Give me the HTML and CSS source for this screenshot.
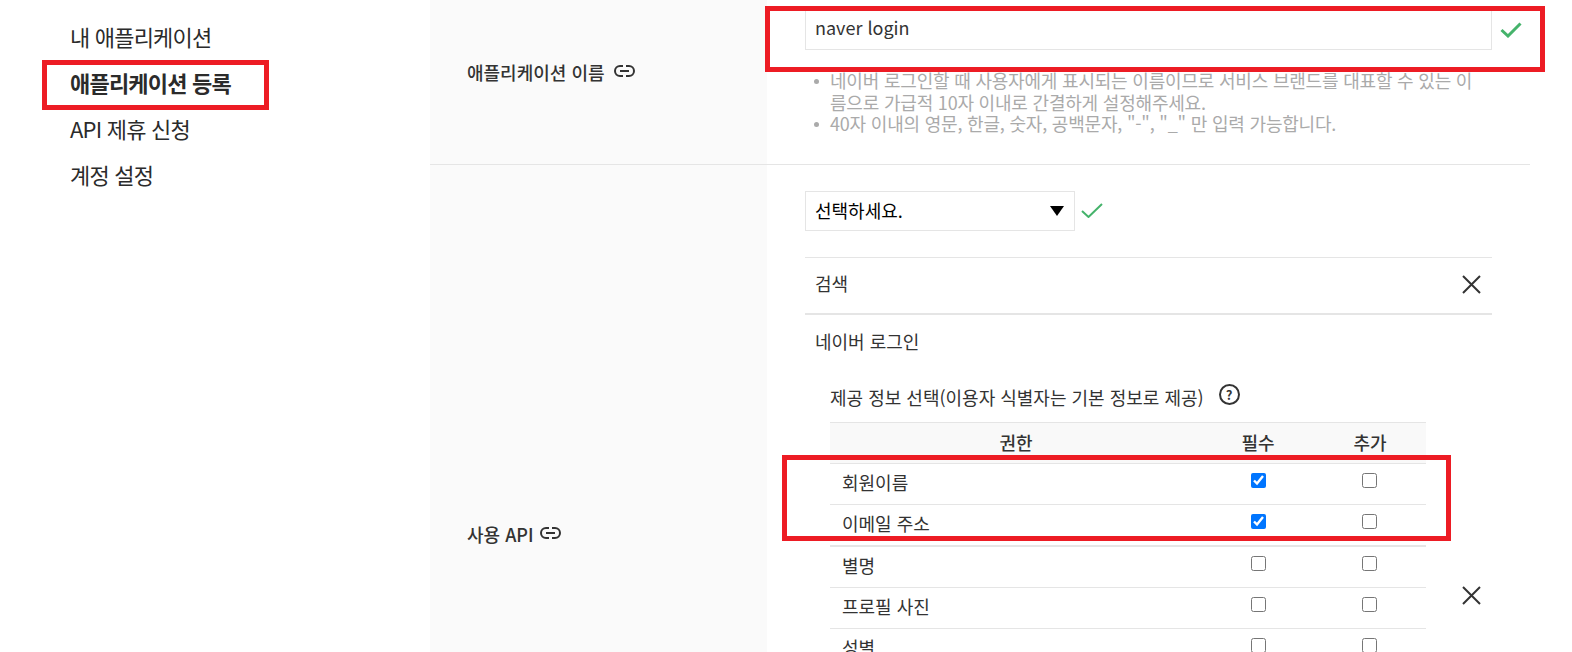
FILE: index.html
```html
<!DOCTYPE html>
<html lang="ko">
<head>
<meta charset="utf-8">
<title>애플리케이션 등록</title>
<link rel="stylesheet" href="styles.css">
</head>
<body>
<div class="page">
  <aside class="side">
    <ul class="nav">
      <li>내 애플리케이션</li>
      <li class="active">애플리케이션 등록</li>
      <li>API 제휴 신청</li>
      <li>계정 설정</li>
    </ul>
  </aside>
  <main class="main">
    <section class="row row-name">
      <div class="label">
        <span>애플리케이션 이름</span>
        <svg class="link" viewBox="0 0 21 12"><path d="M9 1H6a4.500 4.500 0 0 0 0 10h3M12 1h3a4.500 4.500 0 0 1 0 10h-3M6 6h9"/></svg>
      </div>
      <div class="value">
        <div class="field">
          <input class="text" type="text" value="naver login">
          <svg class="ok ok-big" viewBox="0 0 22 16"><path d="M1.500 8l6.500 6L20.500 1.500"/></svg>
        </div>
        <ul class="hint">
          <li>네이버 로그인할 때 사용자에게 표시되는 이름이므로 서비스 브랜드를 대표할 수 있는 이름으로 가급적 10자 이내로 간결하게 설정해주세요.</li>
          <li>40자 이내의 영문, 한글, 숫자, 공백문자, "-", "_" 만 입력 가능합니다.</li>
        </ul>
      </div>
    </section>
    <section class="row row-api">
      <div class="label">
        <span>사용 API</span>
        <svg class="link" viewBox="0 0 21 12"><path d="M9 1H6a4.500 4.500 0 0 0 0 10h3M12 1h3a4.500 4.500 0 0 1 0 10h-3M6 6h9"/></svg>
      </div>
      <div class="value">
        <div class="field">
          <div class="select">선택하세요.<i class="arrow"></i></div>
          <svg class="ok ok-small" viewBox="0 0 22 15"><path d="M1 8l6.500 6L21 1"/></svg>
        </div>
        <div class="services">
          <div class="service service-search">
            <span class="service-title">검색</span>
            <svg class="close" viewBox="0 0 19 19"><path d="M1 1l17 17M18 1L1 18"/></svg>
          </div>
          <div class="service service-login">
            <div class="service-body">
              <div class="service-name">네이버 로그인</div>
              <div class="provide">
                <div class="provide-title">제공 정보 선택(이용자 식별자는 기본 정보로 제공)<span class="help">?</span></div>
                <table class="perm">
                  <thead>
                    <tr><th>권한</th><th class="col">필수</th><th class="col">추가</th></tr>
                  </thead>
                  <tbody>
                    <tr><td>회원이름</td><td class="col"><input type="checkbox" checked></td><td class="col"><input type="checkbox"></td></tr>
                    <tr class="thick"><td>이메일 주소</td><td class="col"><input type="checkbox" checked></td><td class="col"><input type="checkbox"></td></tr>
                    <tr><td>별명</td><td class="col"><input type="checkbox"></td><td class="col"><input type="checkbox"></td></tr>
                    <tr><td>프로필 사진</td><td class="col"><input type="checkbox"></td><td class="col"><input type="checkbox"></td></tr>
                    <tr><td>성별</td><td class="col"><input type="checkbox"></td><td class="col"><input type="checkbox"></td></tr>
                    <tr><td>생일</td><td class="col"><input type="checkbox"></td><td class="col"><input type="checkbox"></td></tr>
                    <tr><td>연령대</td><td class="col"><input type="checkbox"></td><td class="col"><input type="checkbox"></td></tr>
                    <tr><td>출생연도</td><td class="col"><input type="checkbox"></td><td class="col"><input type="checkbox"></td></tr>
                    <tr><td>휴대전화번호</td><td class="col"><input type="checkbox"></td><td class="col"><input type="checkbox"></td></tr>
                  </tbody>
                </table>
              </div>
            </div>
            <svg class="close" viewBox="0 0 19 19"><path d="M1 1l17 17M18 1L1 18"/></svg>
          </div>
        </div>
      </div>
    </section>
  </main>
</div>
<div class="mark mark-nav"></div>
<div class="mark mark-input"></div>
<div class="mark mark-rows"></div>
</body>
</html>
```

FILE: styles.css
```css
* { box-sizing: border-box; }
html, body {
  margin: 0;
  height: 652px;
  overflow: hidden;
  background: #fff;
}
body {
  position: relative;
  font-family: "Noto Sans CJK KR", "Noto Sans", sans-serif;
  color: #333;
}
ul { margin: 0; padding: 0; list-style: none; }

.page { display: flex; align-items: flex-start; }

.side { width: 430px; flex: none; padding: 13px 0 0 70px; }
.nav li {
  height: 46px;
  line-height: 46px;
  font-size: 22px;
  letter-spacing: -0.8px;
  color: #2b2b2b;
}
.nav .active { font-weight: 700; }

.main { width: 1100px; flex: none; }
.row { display: flex; border-bottom: 1px solid #e5e5e5; }
.label {
  width: 337px;
  flex: none;
  display: flex;
  align-items: center;
  gap: 9px;
  padding-left: 37px;
  background: #fafafa;
  font-size: 18px;
  font-weight: 500;
  color: #333;
}
.row-name .label { padding-bottom: 20px; }
.row-api .label { gap: 6px; }
.link {
  width: 21px;
  height: 12px;
  fill: none;
  stroke: #333;
  stroke-width: 2;
  margin-top: -1px;
}
.value { flex: 1; min-width: 0; padding-left: 38px; }
.row-name .value { padding-top: 10px; padding-bottom: 29px; }
.row-api .value { padding-top: 26px; padding-bottom: 27px; }

.field { display: flex; align-items: center; }
.text {
  width: 687px;
  height: 40px;
  padding: 0 9px 6px;
  border: 1px solid #e5e5e5;
  background: #fff;
  font: 18px "Noto Sans CJK KR", "Noto Sans", sans-serif;
  color: #333;
  outline: none;
}
.ok { fill: none; stroke: #45b36b; }
.ok-big { width: 22px; height: 16px; margin: -1px 0 0 8px; stroke-width: 3; }
.ok-small { width: 22px; height: 15px; margin-left: 6px; stroke-width: 2; }

.hint {
  width: 687px;
  margin-top: 20px;
  padding: 0 10px 0 25px;
  font-size: 18px;
  line-height: 21.5px;
  letter-spacing: -0.2px;
  word-break: break-all;
  color: #aaa;
}
.hint li { position: relative; }
.hint li::before {
  content: "";
  position: absolute;
  left: -16px;
  top: 9px;
  width: 5px;
  height: 5px;
  border-radius: 50%;
  background: #aaa;
}

.select {
  position: relative;
  width: 270px;
  height: 40px;
  padding-left: 9px;
  line-height: 36px;
  border: 1px solid #e5e5e5;
  font-size: 18px;
  color: #000;
}
.arrow {
  position: absolute;
  right: 10px;
  top: 14px;
  border-style: solid;
  border-width: 10px 7.5px 0;
  border-color: #000 transparent transparent;
}

.services { width: 687px; margin-top: 26px; }
.service {
  display: flex;
  align-items: center;
  justify-content: space-between;
  padding: 0 11px 0 10px;
  font-size: 18px;
}
.close { width: 19px; height: 19px; flex: none; fill: none; stroke: #333; stroke-width: 2; }
.service-search {
  height: 58px;
  padding-bottom: 2px;
  border-top: 1px solid #e5e5e5;
  border-bottom: 2px solid #e5e5e5;
}
.service-title { margin-top: -3px; }
.service-login { height: 561px; }
.service-body { align-self: flex-start; }
.service-name { margin-top: 13px; line-height: 26px; }
.provide { padding-left: 15px; margin-top: 31px; }
.provide-title { display: flex; align-items: center; height: 24px; margin-bottom: 13px; }
.help {
  width: 21px;
  height: 21px;
  margin: -4px 0 0 15px;
  border: 2px solid #333;
  border-radius: 50%;
  font-size: 13px;
  font-weight: 700;
  line-height: 17px;
  text-align: center;
}
.perm {
  width: 596px;
  table-layout: fixed;
  border-collapse: collapse;
}
.perm th, .perm td { height: 41px; padding: 0; border-bottom: 1px solid #e5e5e5; }
.perm th {
  padding-bottom: 2px;
  border-top: 1px solid #e5e5e5;
  background: #f9f9f9;
  font-weight: 500;
}
.perm td { padding: 0 0 4px 12px; }
.perm .col { width: 112px; text-align: center; }
.perm td.col { padding: 0 0 6px; }
.perm td.col:last-child { padding-right: 2px; }
.perm .thick td { height: 42px; border-bottom-width: 2px; }
.perm input {
  display: block;
  width: 15px;
  height: 15px;
  margin: 0 auto;
}

.mark { position: absolute; border: 5px solid #ed1c24; }
.mark-nav { left: 42px; top: 60px; width: 227px; height: 50px; }
.mark-input { left: 765px; top: 6px; width: 780px; height: 66px; }
.mark-rows { left: 782px; top: 455px; width: 669px; height: 86px; }
```
